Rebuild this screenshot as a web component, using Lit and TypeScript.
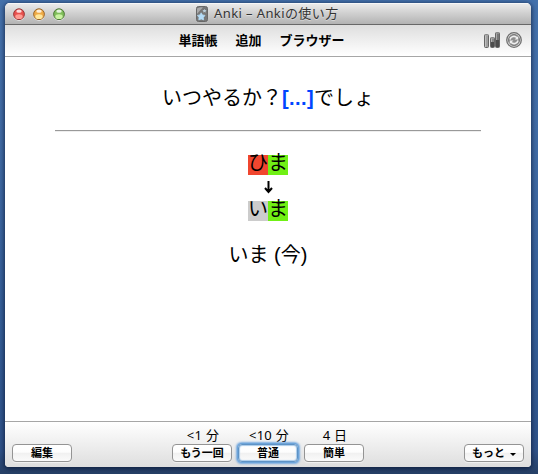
import { LitElement, html, css, svg } from "lit";
import { customElement, property } from "lit/decorators.js";

@customElement("answer-button")
class AnswerButton extends LitElement {
  @property() label = "";
  @property() due = "";
  @property({ type: Boolean }) focused = false;
  @property({ type: Boolean }) menu = false;

  static styles = css`
    :host { display: flex; flex-direction: column; align-items: center; width: 60px; }
    .due { height: 17px; line-height: 17px; font-size: 13px; letter-spacing: 0.3px; white-space: pre; margin: 5px 0 0; padding-left: 2px; }
    button {
      box-sizing: border-box; width: 60px; height: 18px; padding: 0; margin: 0;
      border: 1px solid #949494; border-radius: 4px;
      background: linear-gradient(#fff 0%, #fdfdfd 45%, #f1f1f1 52%, #fbfbfb 100%);
      box-shadow: 0 1px 0 rgba(255, 255, 255, 0.5);
      font: bold 11px/16px "Liberation Sans", "Noto Sans CJK JP", sans-serif; color: #000;
      display: flex; align-items: center; justify-content: center; gap: 5px;
    }
    .focused { border-color: #5f92c4; box-shadow: 0 0 0 1px #6ca4d9, 0 0 2px 1.5px #79ace0, inset 0 0 1px 1px #a9cbea; }
    .arrow { width: 0; height: 0; border: 3px solid transparent; border-top-color: #000; border-bottom: 0; margin-top: 3px; }
  `;

  render() {
    return html`
      <div class="due">${this.due}</div>
      <button class=${this.focused ? "focused" : ""}>
        <span>${this.label}</span>${this.menu ? html`<i class="arrow"></i>` : ""}
      </button>
    `;
  }
}

@customElement("app-root")
class AppRoot extends LitElement {
  static styles = css`
    :host {
      display: block; box-sizing: border-box; width: 538px; height: 474px; padding: 3px 7px 7px 5px; overflow: hidden;
      background: linear-gradient(#4471ab 0%, #426da6 25%, #345d96 70%, #2f5288 95%, #263f65 100%);
      font-family: "Lucida Grande", "Noto Sans", "Noto Sans CJK JP", sans-serif; color: #000;
    }
    .window {
      width: 526px; height: 464px; display: flex; flex-direction: column; overflow: hidden;
      border-radius: 5px 5px 4px 4px; background: #fff; box-shadow: 0 1px 4px 1px rgba(0, 10, 35, 0.6);
    }
    .titlebar {
      box-sizing: border-box; height: 22px; flex: none; display: grid; grid-template-columns: 190px auto 1fr;
      align-items: center; border-bottom: 1px solid #686868; background: linear-gradient(#ededed, #d2d2d2 45%, #b3b3b3);
      box-shadow: inset 0 1px #f7f7f7;
    }
    .lights { display: flex; gap: 8px; padding: 1px 0 0 8px; }
    .lights svg { display: block; }
    .title { display: flex; align-items: center; gap: 5px; height: 21px; font-size: 13px; line-height: 21px; color: #333; white-space: nowrap; text-shadow: 0 1px rgba(255, 255, 255, 0.4); }
    .title svg { display: block; }
    .title span { letter-spacing: 0.4px; }
    .toolbar {
      box-sizing: border-box; height: 32px; flex: none; display: grid; grid-template-columns: 1fr auto 1fr; align-items: center;
      border-bottom: 1px solid #a6a6a6; background: linear-gradient(#dedede, #fff);
    }
    nav { grid-column: 2; display: flex; gap: 18px; padding: 0 13px 1px 0; font: bold 13px/30px "Noto Sans CJK JP", sans-serif; }
    .tools { display: flex; gap: 5px; justify-content: flex-end; padding: 0 9px 1px 0; }
    .tools svg { display: block; }
    .card { flex: 1; padding: 0 50px; text-align: center; font: 20px/30px "Liberation Sans", "Noto Sans CJK JP", sans-serif; }
    .question { padding-top: 26px; height: 47px; white-space: nowrap; }
    .cloze { color: #0045ff; font-weight: bold; letter-spacing: 0.4px; }
    .rule { height: 1px; background: #999; border-bottom: 1px solid #eee; }
    .diff { display: flex; justify-content: center; height: 20px; line-height: 17px; margin-top: 23px; }
    .diff span { width: 20px; }
    .bad { background: #f0462f; }
    .good { background: #70f015; }
    .missing { background: #ccc; }
    .down { display: block; margin: 6px auto 7px; }
    .down + .diff { margin-top: 0; }
    .answer { margin-top: 19px; }
    footer {
      box-sizing: border-box; height: 46px; flex: none; border-top: 1px solid #a6a6a6; padding: 0 7px;
      display: grid; grid-template-columns: 1fr auto 1fr; background: linear-gradient(#fff, #dedede);
    }
    .ratings { display: flex; gap: 6px; }
    .end { justify-self: end; }
  `;

  light(a: string, b: string, c: string) {
    return html`<svg width="12" height="13" viewBox="0 0 12 13">
      <circle cx="6" cy="7" r="5.8" fill="#eee" />
      <circle cx="6" cy="6.2" r="5.4" fill=${b} stroke=${c} />
      <ellipse cx="6" cy="8.7" rx="3.7" ry="2.4" fill=${a} />
      <ellipse cx="6" cy="3.2" rx="2.7" ry="1.6" fill="#fff" opacity=".8" />
    </svg>`;
  }

  bar(x: number, y: number, fill: string) {
    return svg`<rect x=${x + 0.5} y=${y + 0.5} width="4" height=${15 - y} rx="1" fill=${fill} stroke="#666" />
      <path d="M${x + 1.5} ${y + 1.5}V15" stroke="#ddd" opacity=".5" />
      <path d="M${x + 1} ${y + 1}h3" stroke="#aaa" />`;
  }

  render() {
    return html`
      <div class="window">
        <header class="titlebar">
          <div class="lights">
            ${this.light("#ff9b92", "#e7514e", "#943535")}
            ${this.light("#ffe79b", "#eeaa46", "#956329")}
            ${this.light("#c9f2a1", "#7fbd5b", "#4b7537")}
          </div>
          <div class="title">
            <svg width="14" height="16" viewBox="0 0 14 16">
              <rect x="1.5" y=".5" width="11" height="15" rx="2" fill="#777" stroke="#686868" />
              <path d="M2 8V2.5Q6 .5 8 1.5Q5 4 2 8" fill="#aaa" />
              <path d="M9.5 3l.7 1.1 1.3.2-.9 1 .2 1.3-1.3-.5-1.3.5.2-1.3-.9-1 1.3-.2z" fill="#b9cfdc" />
              <path d="M6.2 6.8l1.3 2.1 2.5.5-1.6 2 .2 2.5-2.4-.9-2.4.9.2-2.5-1.6-2 2.5-.5z" fill="#b4dcf7" stroke="#b4dcf7" stroke-width=".7" />
            </svg>
            <span>Anki – Ankiの使い方</span>
          </div>
        </header>
        <div class="toolbar">
          <nav><span>単語帳</span><span>追加</span><span>ブラウザー</span></nav>
          <div class="tools">
            <svg width="17" height="16" viewBox="0 0 17 16">
              ${this.bar(0, 2, "#a0a0a0")}${this.bar(6, 5, "#888")}${this.bar(11, 0, "#777")}
              <path d="M7 10h3v5H7zM12 8h3v7h-3z" fill="#4c4c4c" />
            </svg>
            <svg width="16" height="16" viewBox="0 0 16 16" fill="none">
              <circle cx="8" cy="8" r="7.3" fill="#ddd" stroke="#707070" stroke-width="1.3" />
              <circle cx="8" cy="8" r="5.5" fill="#8e8e8e" stroke="#777" />
              <path d="M4 7.5C4.6 4.4 8.7 3.4 11 5.7M12 8.5C11.4 11.6 7.3 12.6 5 10.3" stroke="#eee" stroke-width="1.6" />
              <path d="M12.2 4v3.6H8.6zM3.8 12V8.4h3.6z" fill="#eee" />
            </svg>
          </div>
        </div>
        <main class="card">
          <div class="question">いつやるか？<span class="cloze">[...]</span>でしょ</div>
          <div class="rule"></div>
          <div class="diff"><span class="bad">ひ</span><span class="good">ま</span></div>
          <svg class="down" width="11" height="13" viewBox="0 0 11 13" fill="none" stroke="#000" stroke-width="2">
            <path d="M5.5 0V11M2 7L5.5 11L9 7" />
          </svg>
          <div class="diff"><span class="missing">い</span><span class="good">ま</span></div>
          <div class="answer">いま (今)</div>
        </main>
        <footer>
          <answer-button label="編集"></answer-button>
          <div class="ratings">
            <answer-button label="もう一回" due="<1 分"></answer-button>
            <answer-button label="普通" due="<10 分" focused></answer-button>
            <answer-button label="簡単" due="4 日"></answer-button>
          </div>
          <answer-button class="end" label="もっと" menu></answer-button>
        </footer>
      </div>
    `;
  }
}
